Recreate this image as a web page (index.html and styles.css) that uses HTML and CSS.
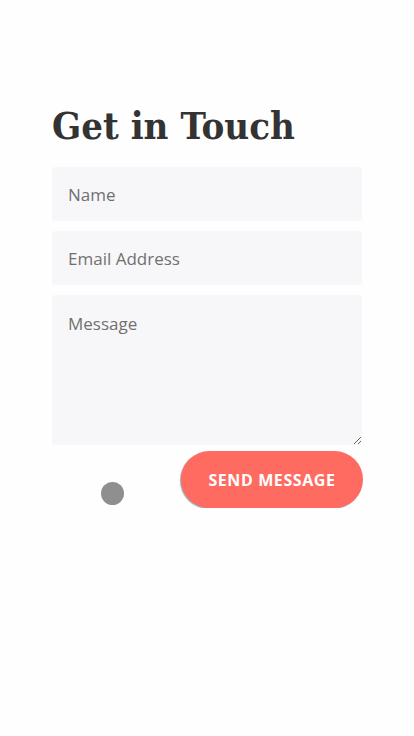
FILE: index.html
```html
<!DOCTYPE html>
<html lang="en">
<head>
<meta charset="utf-8">
<meta name="viewport" content="width=device-width, initial-scale=1">
<title>Get in Touch</title>
<link rel="stylesheet" href="styles.css">
</head>
<body>
<main class="contact">
  <h1 class="contact__title">Get in Touch</h1>
  <form class="contact__form">
    <input class="field" type="text" placeholder="Name">
    <input class="field" type="email" placeholder="Email Address">
    <textarea class="field field--area" placeholder="Message"></textarea>
    <div class="actions">
      <button class="send-btn" type="button">SEND MESSAGE</button>
    </div>
  </form>
  <span class="touch-dot"></span>
</main>
</body>
</html>
```
FILE: styles.css
```css
html, body {
  margin: 0;
  padding: 0;
  background: #fefefe;
}
body {
  font-family: "Open Sans", "Noto Sans", sans-serif;
}
.contact {
  position: relative;
  width: 310px;
  padding: 100px 0 0 52px;
}
.contact__title {
  margin: 0 0 15px;
  font-family: "DejaVu Serif Condensed", "DejaVu Serif", serif;
  font-stretch: condensed;
  font-weight: bold;
  font-size: 38px;
  line-height: 52px;
  color: #333333;
  letter-spacing: 0;
}
.contact__form {
  display: flex;
  flex-direction: column;
  gap: 10px;
}
.field {
  display: block;
  box-sizing: border-box;
  width: 310px;
  height: 54px;
  margin: 0;
  padding: 0 16px;
  border: none;
  border-radius: 3px;
  background: #f7f7f9;
  font-family: "Open Sans", "Noto Sans", sans-serif;
  font-size: 17px;
  color: #444;
  outline: none;
}
.field::placeholder {
  color: #707070;
}
.field--area {
  height: 150px;
  padding: 17px 16px;
  resize: vertical;
  line-height: 24px;
}
.actions {
  display: flex;
  justify-content: flex-end;
  margin-top: -4px;
  margin-right: -1px;
}
.send-btn {
  width: 182px;
  height: 57px;
  border: none;
  border-radius: 29px;
  background: #ff6b61;
  color: #ffffff;
  font-family: "Open Sans", "Noto Sans", sans-serif;
  font-weight: bold;
  font-size: 16px;
  letter-spacing: 0.6px;
  box-shadow: -1px 1px 1px rgba(0, 0, 0, 0.35);
  cursor: pointer;
}
.touch-dot {
  position: absolute;
  left: 101px;
  top: 482px;
  width: 23px;
  height: 23px;
  border-radius: 50%;
  background: #8f8f8f;
}
```
